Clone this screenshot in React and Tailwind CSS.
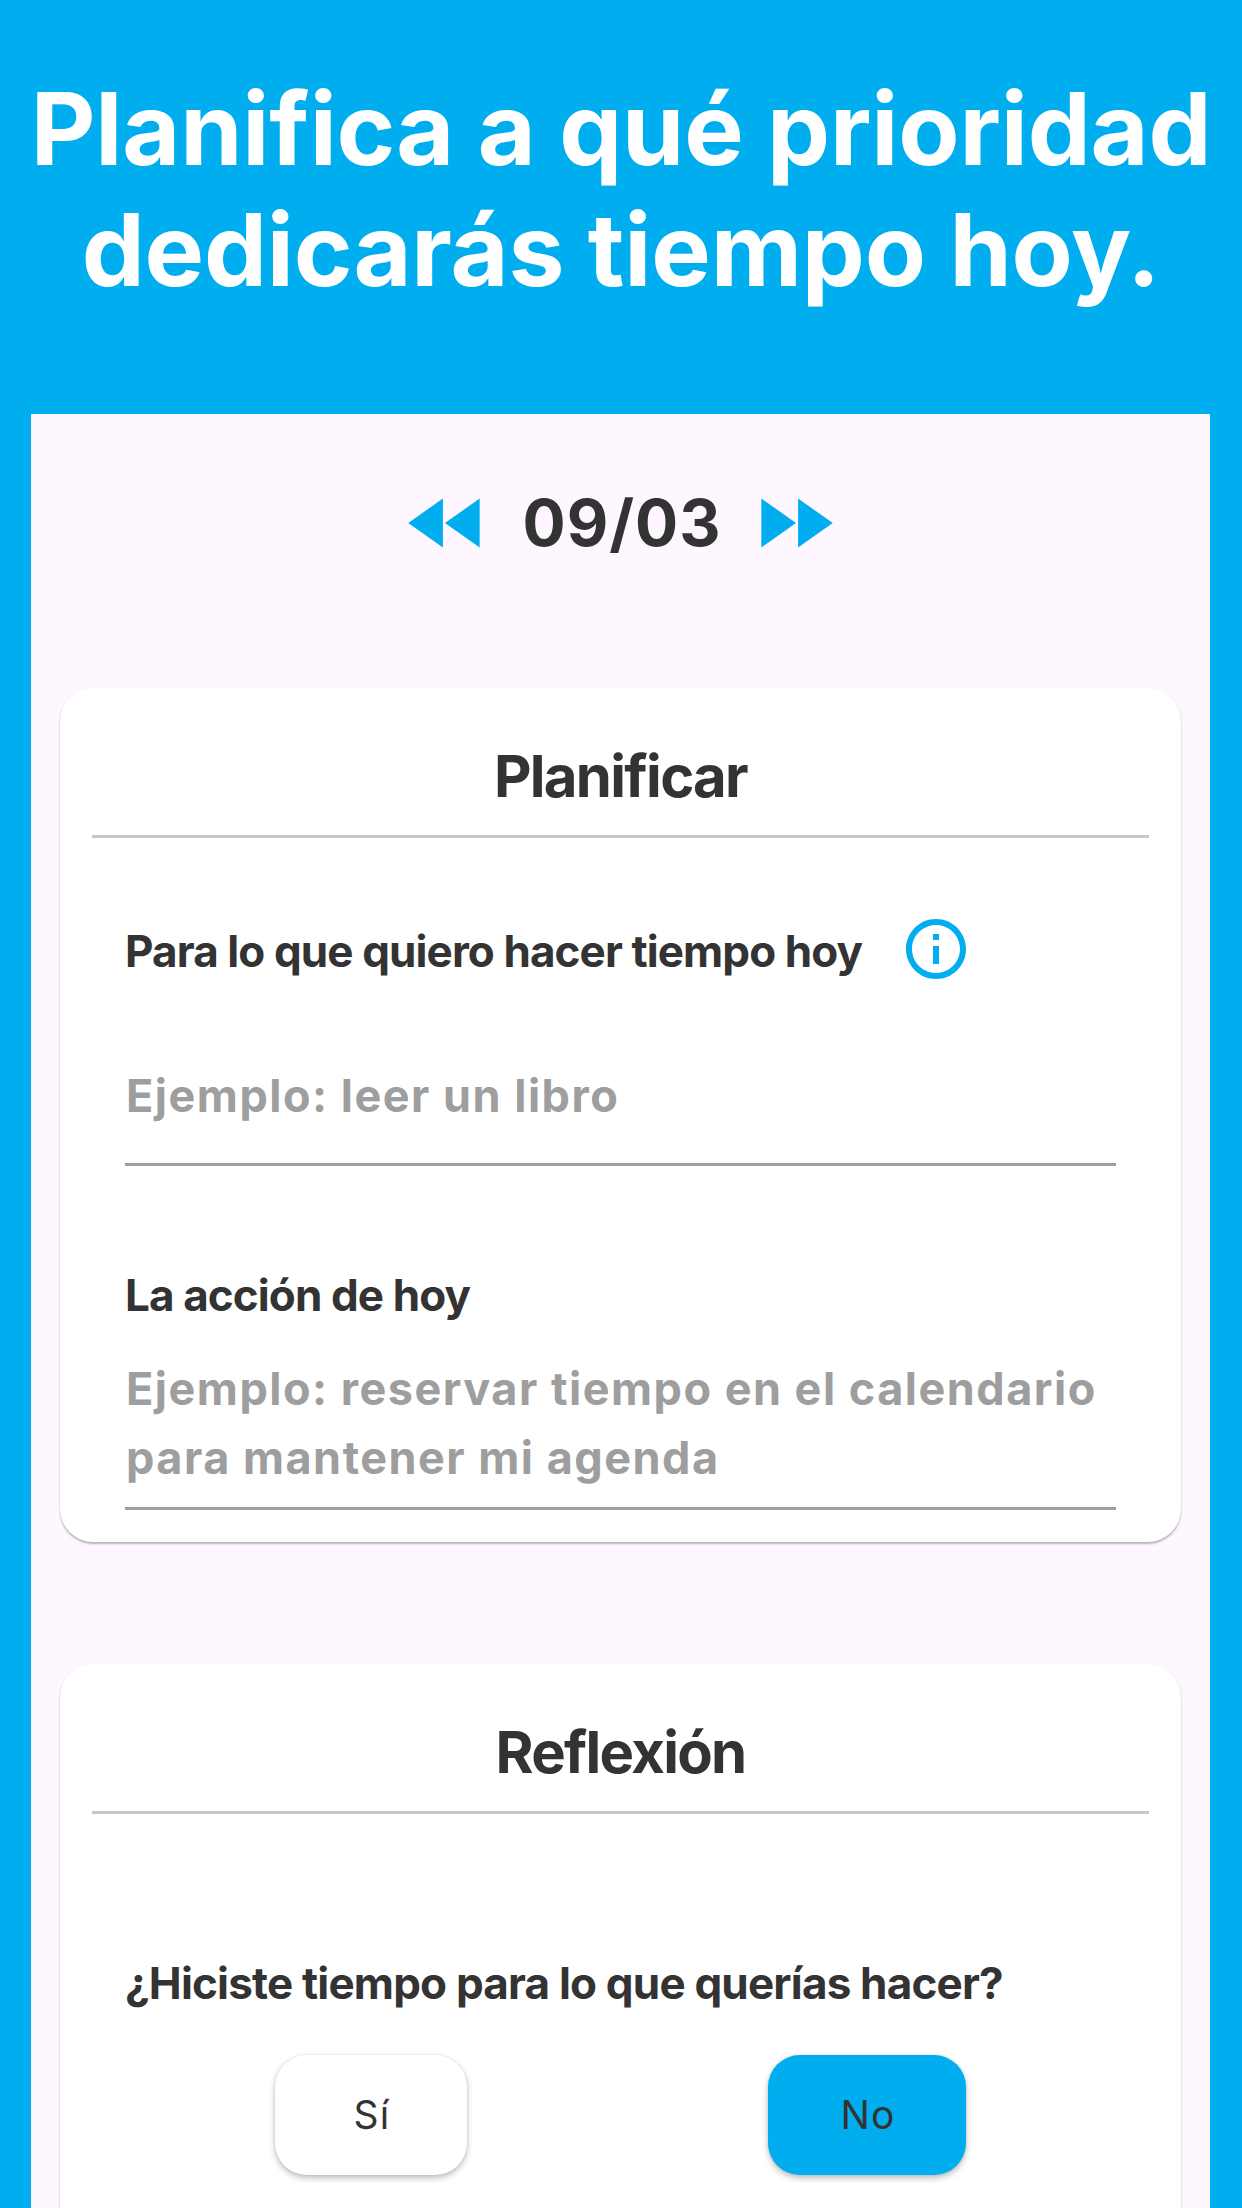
import { MdFastForward, MdFastRewind, MdInfoOutline } from "react-icons/md";

const answers = [
  { label: "Sí", style: "w-[192px] bg-white" },
  { label: "No", style: "w-[198px] bg-[#00aef0]" },
];

function Card({ title, children }) {
  return (
    <section className="rounded-[33px] bg-white px-8 pt-[52px] pb-8 shadow-[0_2px_2px_rgba(0,0,0,0.27),0_0_2px_rgba(0,0,0,0.06)]">
      <h2 className="text-center text-[58px] leading-[72px] font-[650] tracking-[-1.7px]">
        {title}
      </h2>
      <div className="mt-[23px] h-[3px] bg-[#cac4d0]" />
      <div className="px-[33px]">{children}</div>
    </section>
  );
}

function Placeholder({ className, children }) {
  return (
    <div
      className={`border-b-[3px] border-[#9e9e9e] pl-px text-[45px] leading-[69px] font-[650] tracking-[1.5px] text-[#9e9e9e] ${className}`}
    >
      {children}
    </div>
  );
}

export default function App() {
  return (
    <div className="flex h-[2208px] w-[1242px] flex-col overflow-hidden bg-[#00aef0] font-['Inter',sans-serif]">
      <h1 className="pt-[68px] text-center text-[100px] leading-[121px] font-bold tracking-[-0.15px] text-white">
        Planifica a qué prioridad
        <br />
        dedicarás tiempo hoy.
      </h1>

      <main className="mt-[104px] ml-[31px] h-[1794px] w-[1179px] overflow-hidden bg-[#fef7ff] px-[29px] pt-[60px] text-[#333333]">
        <div className="flex h-[98px] items-center justify-center gap-[23px]">
          <MdFastRewind className="size-[98px] text-[#00aef0]" />
          <span className="pl-[3px] text-[64px] leading-[98px] font-[650] tracking-[1px]">
            09/03
          </span>
          <MdFastForward className="size-[98px] text-[#00aef0]" />
        </div>

        <div className="mt-[116px] flex flex-col gap-[122px]">
          <Card title="Planificar">
            <div className="mt-[75px] flex h-[72px] items-center gap-[38px]">
              <h3 className="pt-[3px] text-[44px] font-bold tracking-[-0.89px]">
                Para lo que quiero hacer tiempo hoy
              </h3>
              <MdInfoOutline className="size-[72px] text-[#00aef0]" />
            </div>
            <Placeholder className="mt-[76px] pb-[33px]">
              Ejemplo: leer un libro
            </Placeholder>
            <h3 className="mt-[99px] text-[44px] leading-[60px] font-bold tracking-[-0.89px]">
              La acción de hoy
            </h3>
            <Placeholder className="mt-[29px] pb-[15px]">
              Ejemplo: reservar tiempo en el calendario
              <br />
              para mantener mi agenda
            </Placeholder>
          </Card>

          <Card title="Reflexión">
            <h3 className="mt-[139px] text-[44px] leading-[60px] font-bold tracking-[-0.8px]">
              ¿Hiciste tiempo para lo que querías hacer?
            </h3>
            <div className="mt-[42px] ml-[150px] flex gap-[301px] pb-12">
              {answers.map((answer) => (
                <button
                  key={answer.label}
                  className={`h-[120px] rounded-[32px] pl-[2px] text-[39px] tracking-[1.2px] shadow-[0_3px_6px_rgba(0,0,0,0.26),0_0_3px_rgba(0,0,0,0.08)] ${answer.style}`}
                >
                  {answer.label}
                </button>
              ))}
            </div>
          </Card>
        </div>
      </main>
    </div>
  );
}
